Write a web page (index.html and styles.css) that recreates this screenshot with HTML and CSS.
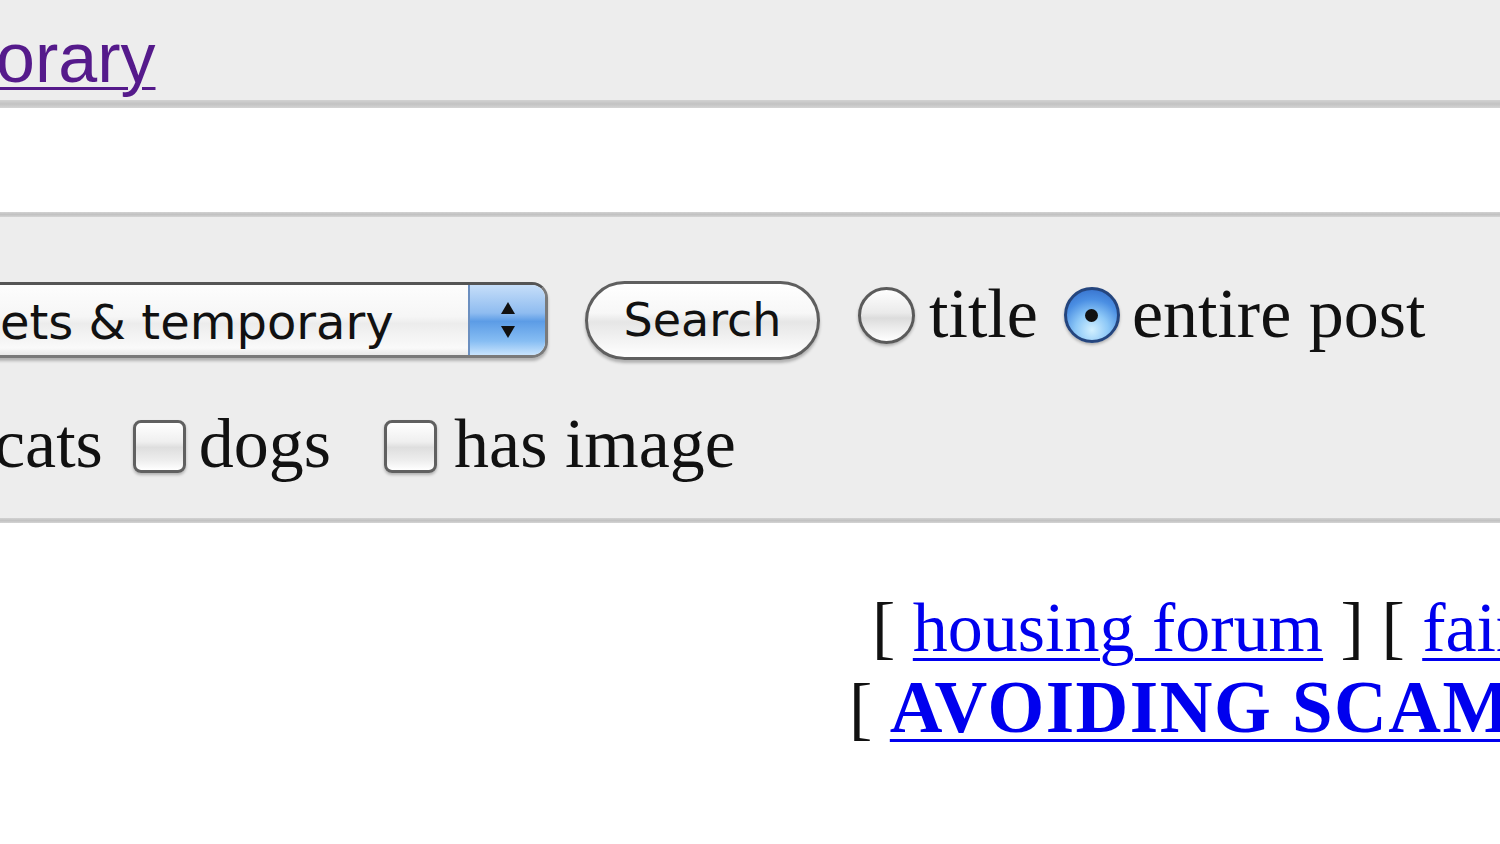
FILE: index.html
```html
<!DOCTYPE html>
<html>
<head>
<meta charset="utf-8">
<link rel="stylesheet" href="styles.css">
</head>
<body>
<div class="page">
  <div class="topbar"><a class="toplink" href="#">orary</a></div>
  <div class="rule rule-thick"></div>
  <div class="blank"></div>
  <div class="rule"></div>
  <form class="searchform">
    <div class="row row-main">
      <div class="select">
        <span class="select-text">ets &amp; temporary</span>
        <span class="select-arrows">
          <svg width="22" height="44" viewBox="0 0 22 44"><path d="M11 4 L18 16 L4 16 Z" fill="#111"/><path d="M4 28 L18 28 L11 40 Z" fill="#111"/></svg>
        </span>
      </div>
      <button type="button" class="btn">Search</button>
      <label class="opt opt-title"><span class="radio"></span><span class="lbl">title</span></label>
      <label class="opt opt-post"><span class="radio radio-on"><span class="dot"></span></span><span class="lbl lbl-post">entire post</span></label>
    </div>
    <div class="row row-checks">
      <span class="lbl lbl-cats">cats</span>
      <span class="check check-dogs"></span><span class="lbl lbl-dogs">dogs</span>
      <span class="check check-img"></span><span class="lbl lbl-img">has image</span>
    </div>
  </form>
  <div class="rule"></div>
  <div class="links">
    <div class="line line1">[ <a href="#">housing forum</a> ] [ <a href="#">fair housing/equal opportunity</a> ]</div>
    <div class="line line2">[ <a href="#" class="strong">AVOIDING SCAMS &amp; FRAUD</a> ]</div>
  </div>
</div>
</body>
</html>
```
FILE: styles.css
```css
html, body {
  margin: 0;
  padding: 0;
  background: #fff;
}
.page {
  width: 1500px;
  height: 844px;
  overflow: hidden;
  font-family: "Liberation Serif", "Times New Roman", serif;
}
.topbar {
  height: 100px;
  background: #ededed;
  overflow: hidden;
}
.toplink {
  display: block;
  margin-left: -4px;
  padding-top: 18px;
  font-family: "Liberation Sans", Arial, sans-serif;
  font-size: 70px;
  line-height: 80px;
  color: #551a8b;
  text-decoration: underline;
  text-decoration-thickness: 3px;
  text-underline-offset: 5px;
}
.rule {
  height: 5px;
  background: linear-gradient(#d2d2d2, #c2c2c2 50%, #d4d4d4);
}
.rule-thick {
  height: 8px;
}
.blank {
  height: 104px;
  background: #fff;
}
.searchform {
  margin: 0;
  height: 301px;
  background: #ededed;
  padding-top: 64px;
  box-sizing: border-box;
}
.row {
  display: flex;
  align-items: flex-start;
  white-space: nowrap;
}
.row-main {
  height: 80px;
}
.select {
  margin-left: -60px;
  margin-top: 1px;
  width: 608px;
  height: 76px;
  box-sizing: border-box;
  display: flex;
  align-items: stretch;
  border: 3px solid #7a7a7a;
  border-top-color: #555;
  border-left: none;
  border-radius: 0 16px 16px 0;
  background: linear-gradient(#fdfdfd, #f6f6f6 45%, #ececec 55%, #fafafa 90%, #e9e9e9);
  box-shadow: 0 3px 3px rgba(0, 0, 0, 0.25);
  overflow: hidden;
}
.select-text {
  flex: 1;
  display: flex;
  align-items: center;
  padding-left: 60px;
  padding-top: 3px;
  font-family: "DejaVu Sans", Verdana, sans-serif;
  font-size: 48px;
  color: #111;
}
.select-arrows {
  width: 75px;
  display: flex;
  align-items: center;
  justify-content: center;
  border-left: 2px solid #6b8fc0;
  background: linear-gradient(#c6def9, #8fbcf0 40%, #5c9ce6 52%, #86bdf3 80%, #c9e4fd);
}
.btn {
  margin-left: 37px;
  width: 235px;
  height: 79px;
  border: 3px solid #5f5f5f;
  border-radius: 40px;
  background: linear-gradient(#ffffff, #f7f7f7 40%, #e6e6e6 52%, #f2f2f2 75%, #ffffff);
  box-shadow: 0 3px 3px rgba(0, 0, 0, 0.25);
  font-family: "DejaVu Sans", Verdana, sans-serif;
  font-size: 46px;
  color: #111;
  padding: 0 0 2px 0;
  cursor: pointer;
}
.opt {
  display: flex;
  align-items: flex-start;
}
.opt-title {
  margin-left: 38px;
}
.opt-post {
  margin-left: 26px;
}
.radio {
  flex: none;
  display: flex;
  align-items: center;
  justify-content: center;
  margin-top: 6px;
  width: 57px;
  height: 57px;
  box-sizing: border-box;
  border-radius: 50%;
  border: 3px solid #5a5a5a;
  background: linear-gradient(#fefefe, #eaeaea 45%, #dcdcdc 55%, #f4f4f4 85%, #ffffff);
  box-shadow: 0 2px 3px rgba(0, 0, 0, 0.25);
}
.radio-on {
  width: 56px;
  height: 56px;
  border-color: #24457e;
  background: radial-gradient(circle at 50% 80%, #d2f0ff 0%, #8dc8f7 35%, #4b8fe3 65%, #2f66c4 100%);
}
.dot {
  width: 13px;
  height: 13px;
  border-radius: 50%;
  background: #111;
}
.lbl {
  font-size: 70px;
  line-height: 70px;
  margin-top: -2px;
  color: #111;
}
.opt-title .lbl {
  margin-left: 14px;
}
.lbl-post {
  margin-left: 12px;
}
.row-checks {
  margin-top: 48px;
}
.row-checks .lbl {
  margin-top: 0;
}
.lbl-cats {
  margin-left: -6px;
}
.check {
  flex: none;
  margin-top: 11px;
  width: 53px;
  height: 53px;
  box-sizing: border-box;
  border: 3px solid #606060;
  border-radius: 8px;
  background: linear-gradient(#ffffff, #efefef 40%, #dedede 52%, #eeeeee 80%, #ffffff);
  box-shadow: 0 2px 3px rgba(0, 0, 0, 0.25);
}
.check-dogs {
  margin-left: 30px;
}
.lbl-dogs {
  margin-left: 13px;
}
.check-img {
  margin-left: 53px;
}
.lbl-img {
  margin-left: 17px;
}
.links {
  padding-top: 67px;
  font-size: 70px;
  line-height: 76px;
  color: #111;
}
.line {
  white-space: nowrap;
}
.line1 {
  padding-left: 872px;
}
.line2 {
  padding-left: 849px;
  padding-top: 4px;
}
.links a {
  color: #0000ee;
  text-decoration: underline;
  text-decoration-thickness: 3px;
  text-underline-offset: 7px;
}
.links a.strong {
  font-weight: bold;
  font-size: 73px;
  letter-spacing: 1.5px;
}
```
